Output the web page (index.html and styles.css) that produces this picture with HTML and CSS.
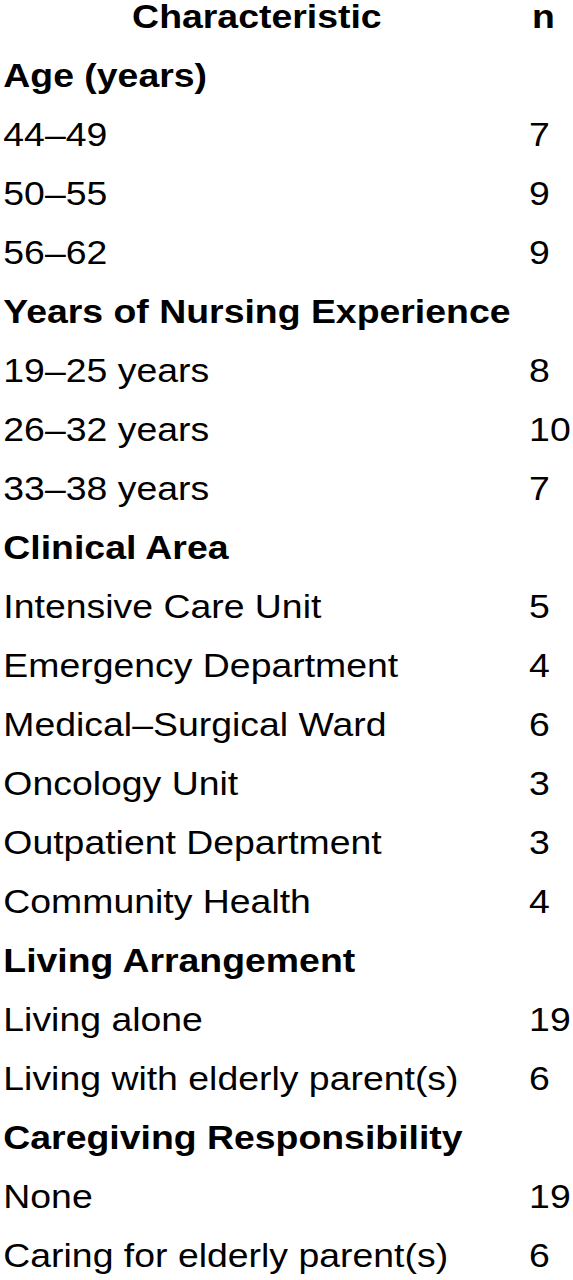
FILE: index.html
```html
<!DOCTYPE html>
<html>
<head>
    <meta charset="utf-8">
    <title>Participant Characteristics</title>
    <link rel="stylesheet" href="styles.css">
</head>
<body>
    <table class="char-table">
        <thead>
            <tr>
                <th class="col-label">Characteristic</th>
                <th class="col-n">n</th>
            </tr>
        </thead>
        <tbody>
            <tr class="group"><td colspan="2">Age (years)</td></tr>
            <tr><td>44–49</td><td class="num">7</td></tr>
            <tr><td>50–55</td><td class="num">9</td></tr>
            <tr><td>56–62</td><td class="num">9</td></tr>

            <tr class="group"><td colspan="2">Years of Nursing Experience</td></tr>
            <tr><td>19–25 years</td><td class="num">8</td></tr>
            <tr><td>26–32 years</td><td class="num">10</td></tr>
            <tr><td>33–38 years</td><td class="num">7</td></tr>

            <tr class="group"><td colspan="2">Clinical Area</td></tr>
            <tr><td>Intensive Care Unit</td><td class="num">5</td></tr>
            <tr><td>Emergency Department</td><td class="num">4</td></tr>
            <tr><td>Medical–Surgical Ward</td><td class="num">6</td></tr>
            <tr><td>Oncology Unit</td><td class="num">3</td></tr>
            <tr><td>Outpatient Department</td><td class="num">3</td></tr>
            <tr><td>Community Health</td><td class="num">4</td></tr>

            <tr class="group"><td colspan="2">Living Arrangement</td></tr>
            <tr><td>Living alone</td><td class="num">19</td></tr>
            <tr><td>Living with elderly parent(s)</td><td class="num">6</td></tr>

            <tr class="group"><td colspan="2">Caregiving Responsibility</td></tr>
            <tr><td>None</td><td class="num">19</td></tr>
            <tr><td>Caring for elderly parent(s)</td><td class="num">6</td></tr>
        </tbody>
    </table>
</body>
</html>
```

FILE: styles.css
```css
body {
    margin: 0;
    background: #fff;
    color: #000;
    font-family: "Liberation Sans", Arial, sans-serif;
    overflow: hidden;
}
/* the source table is set slightly wide, so stretch it horizontally */
.char-table {
    border-collapse: collapse;
    table-layout: fixed;
    width: 521px;
    font-size: 34px;
    transform: scaleX(1.1);
    transform-origin: 0 0;
}
.char-table th,
.char-table td {
    padding: 0 0 27px 3px;
    line-height: 32px;
    white-space: nowrap;
    text-align: left;
    vertical-align: top;
}
.char-table th { font-weight: bold; }
.char-table th.col-label { width: 467px; text-align: center; padding-left: 0; }
.char-table th.col-n { text-align: center; padding-left: 0; }
.group td { font-weight: bold; }
.char-table td.num { padding-left: 14px; }
```
